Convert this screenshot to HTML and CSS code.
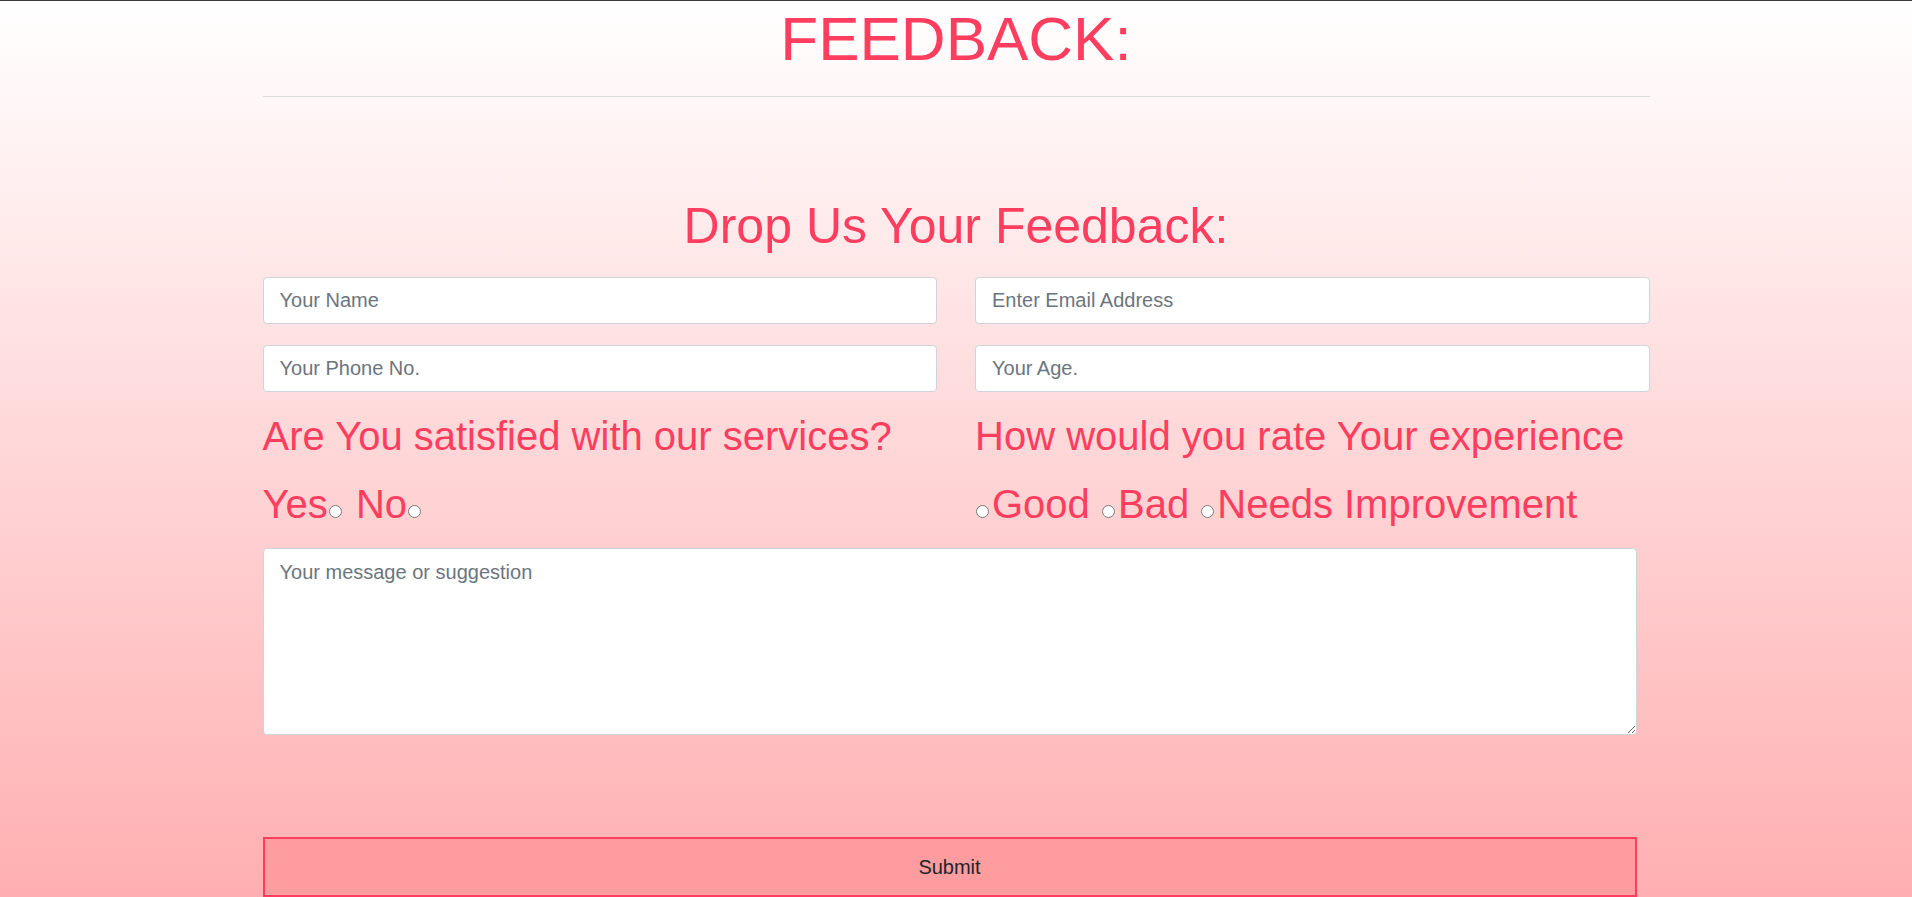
FILE: index.html
```html
<!DOCTYPE html>
<html lang="en">
<head>
    <meta charset="UTF-8">
    <meta name="viewport" content="width=device-width, initial-scale=1.0">
    <title>Feedback</title>
    <link rel="stylesheet" href="styles.css">
</head>
<body>
    <div class="container">
        <h1 class="page-title">FEEDBACK:</h1>
        <hr class="divider">

        <form class="feedback-form" onsubmit="return false;">
            <h2 class="form-title">Drop Us Your Feedback:</h2>

            <div class="field-grid">
                <input type="text" class="form-control" placeholder="Your Name">
                <input type="email" class="form-control" placeholder="Enter Email Address">
                <input type="text" class="form-control" placeholder="Your Phone No.">
                <input type="text" class="form-control" placeholder="Your Age.">
            </div>

            <div class="question-grid">
                <div class="question">
                    <h3 class="question-title">Are You satisfied with our services?</h3>
                    <div class="options">Yes<input type="radio" name="satisfied" value="yes"> No<input type="radio" name="satisfied" value="no"></div>
                </div>
                <div class="question">
                    <h3 class="question-title">How would you rate Your experience</h3>
                    <div class="options"><input type="radio" name="rating" value="good">Good <input type="radio" name="rating" value="bad">Bad <input type="radio" name="rating" value="improve">Needs Improvement</div>
                </div>
            </div>

            <textarea class="form-control message" placeholder="Your message or suggestion"></textarea>

            <button type="submit" class="submit-btn">Submit</button>
        </form>
    </div>
</body>
</html>
```

FILE: styles.css
```css
html {
    min-height: 100%;
    background: linear-gradient(to bottom, #ffffff 0%, #ffafb1 100%);
}
body {
    margin: 0;
    border-top: 1px solid #3a3a3a;
    font-family: "Liberation Sans", Arial, sans-serif;
    color: #ff3d5f;
}
.container {
    width: 1387px;
    margin: 0 auto;
}
.page-title {
    margin: 0;
    font-size: 62px;
    font-weight: normal;
    line-height: 76px;
    text-align: center;
}
.divider {
    margin: 19px 0 0;
    border: 0;
    border-top: 1px solid #dcdcdc;
}
.form-title {
    margin: 100px 0 22px;
    font-size: 50px;
    font-weight: normal;
    line-height: 58px;
    text-align: center;
}
.field-grid,
.question-grid {
    display: grid;
    grid-template-columns: 1fr 1fr;
    column-gap: 38px;
}
.field-grid { row-gap: 21px; }
.question-grid { margin-top: 20px; }
.form-control {
    display: block;
    box-sizing: border-box;
    width: 100%;
    height: 47px;
    padding: 8px 16px;
    font-family: "Liberation Sans", Arial, sans-serif;
    font-size: 20px;
    line-height: 1.5;
    color: #495057;
    background-color: #fff;
    border: 1px solid #ced4da;
    border-radius: 4px;
}
.form-control::placeholder { color: #6c757d; }
.form-control:focus {
    outline: none;
    border-color: #ff3d5f;
}
.question-title {
    margin: 0 0 20px;
    font-size: 40px;
    font-weight: normal;
    line-height: 48px;
    white-space: nowrap;
}
.options {
    font-size: 40px;
    line-height: 48px;
    white-space: nowrap;
}
.options input[type="radio"] {
    width: 13px;
    height: 13px;
    margin: 3px 3px 0 1px;
}
.message {
    width: 1374px;
    height: 187px;
    margin-top: 20px;
    resize: both;
}
.submit-btn {
    display: block;
    box-sizing: border-box;
    width: 1374px;
    height: 60px;
    margin-top: 102px;
    padding: 14px;
    font-family: "Liberation Sans", Arial, sans-serif;
    font-size: 20px;
    color: #212529;
    background-color: #ff9c9f;
    border: 2px solid #ff3d60;
    cursor: pointer;
}
.submit-btn:hover { background-color: #ff8f93; }
```
